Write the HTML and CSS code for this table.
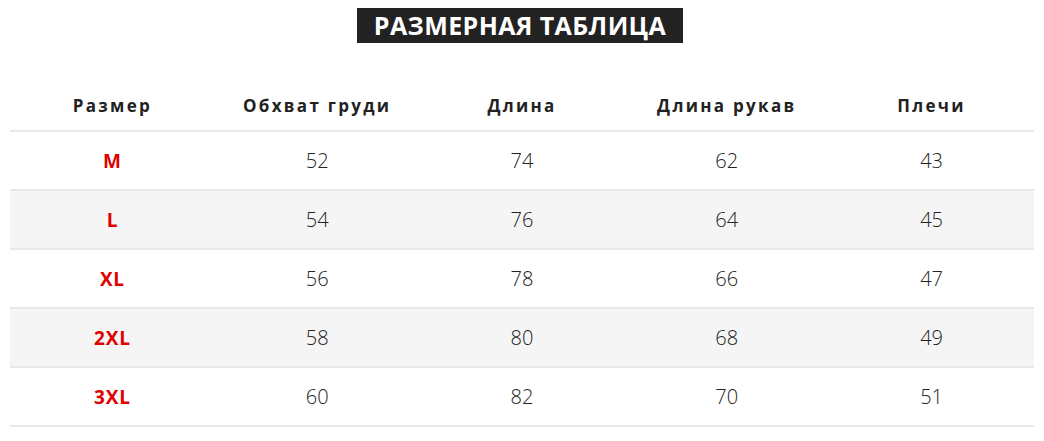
FILE: index.html
```html
<!DOCTYPE html>
<html lang="ru">
<head>
<meta charset="utf-8">
<title>Размерная таблица</title>
<link rel="stylesheet" href="styles.css">
</head>
<body>
<div class="page">
  <div class="title-wrap"><h1 class="title">РАЗМЕРНАЯ ТАБЛИЦА</h1></div>
  <table class="sizes">
    <thead>
      <tr><th>Размер</th><th>Обхват груди</th><th>Длина</th><th>Длина рукав</th><th>Плечи</th></tr>
    </thead>
    <tbody>
      <tr><td class="size">M</td><td>52</td><td>74</td><td>62</td><td>43</td></tr>
      <tr><td class="size">L</td><td>54</td><td>76</td><td>64</td><td>45</td></tr>
      <tr><td class="size">XL</td><td>56</td><td>78</td><td>66</td><td>47</td></tr>
      <tr><td class="size">2XL</td><td>58</td><td>80</td><td>68</td><td>49</td></tr>
      <tr><td class="size">3XL</td><td>60</td><td>82</td><td>70</td><td>51</td></tr>
    </tbody>
  </table>
</div>
</body>
</html>
```
FILE: styles.css
```css
html, body {
  margin: 0;
  padding: 0;
  background: #fff;
}
body {
  font-family: "Open Sans", "Liberation Sans", sans-serif;
  color: #333;
}
.page {
  padding: 8px 10px 0;
}
.title-wrap {
  display: flex;
  justify-content: center;
}
.title {
  margin: 0 0 0 -4px;
  background: #222;
  color: #fff;
  font-size: 25px;
  font-weight: 700;
  line-height: 35px;
  height: 35px;
  padding: 0 17px;
  letter-spacing: 0.4px;
}
.sizes {
  width: 1024px;
  border-collapse: collapse;
  table-layout: fixed;
  margin-top: 37px;
}
.sizes th {
  font-size: 17px;
  font-weight: 700;
  letter-spacing: 2.3px;
  color: #222;
  height: 50px;
  padding: 0;
  vertical-align: middle;
  border-bottom: 2px solid #e8e8e8;
}
.sizes td {
  text-align: center;
  font-size: 20px;
  font-weight: 300;
  color: #222;
  height: 57px;
  padding: 0;
  border-bottom: 2px solid #e8e8e8;
}
.sizes tbody tr:nth-child(even) td {
  background: #f5f5f5;
}
.sizes td.size {
  color: #e00000;
  font-weight: 700;
  font-size: 19px;
  letter-spacing: 0.8px;
}
```
